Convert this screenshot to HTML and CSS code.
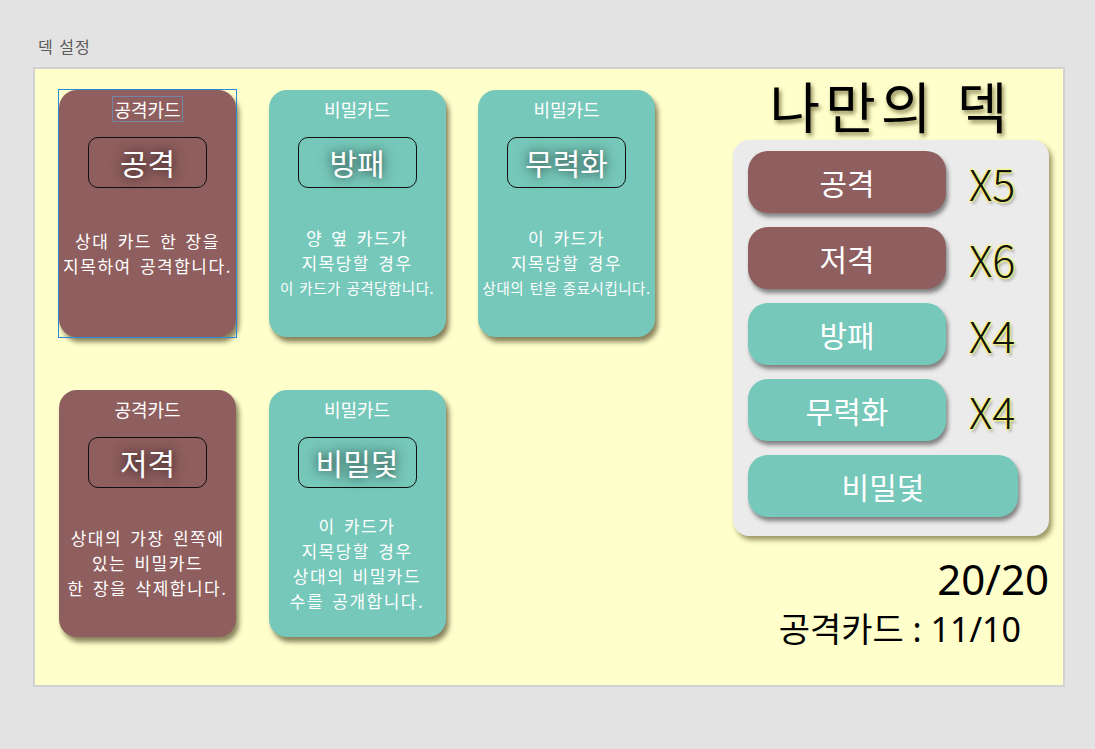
FILE: index.html
```html
<!DOCTYPE html>
<html lang="ko">
<head>
  <meta charset="UTF-8" />
  <title>덱 설정</title>
  <link rel="stylesheet" href="styles.css">
</head>
<body>

  <div class="page-label">덱 설정</div>

  <div class="board">
    <div class="card-grid">
      <div class="card attack selected">
        <div class="card-type"><span class="type-text">공격카드</span></div>
        <div class="card-name">공격</div>
        <div class="card-desc short">상대 카드 한 장을<br>지목하여 공격합니다.</div>
      </div>
      <div class="card secret">
        <div class="card-type"><span class="type-text">비밀카드</span></div>
        <div class="card-name">방패</div>
        <div class="card-desc">양 옆 카드가<br>지목당할 경우<br><small>이 카드가 공격당합니다.</small></div>
      </div>
      <div class="card secret">
        <div class="card-type"><span class="type-text">비밀카드</span></div>
        <div class="card-name">무력화</div>
        <div class="card-desc">이 카드가<br>지목당할 경우<br><small>상대의 턴을 종료시킵니다.</small></div>
      </div>
      <div class="card attack">
        <div class="card-type"><span class="type-text">공격카드</span></div>
        <div class="card-name">저격</div>
        <div class="card-desc">상대의 가장 왼쪽에<br>있는 비밀카드<br>한 장을 삭제합니다.</div>
      </div>
      <div class="card secret">
        <div class="card-type"><span class="type-text">비밀카드</span></div>
        <div class="card-name">비밀덫</div>
        <div class="card-desc">이 카드가<br>지목당할 경우<br>상대의 비밀카드<br>수를 공개합니다.</div>
      </div>
    </div>

    <div class="deck-side">
      <h1 class="deck-title">나만의 덱</h1>
      <div class="deck-panel">
        <div class="deck-row">
          <div class="deck-btn attack">공격</div>
          <span class="count">X5</span>
        </div>
        <div class="deck-row">
          <div class="deck-btn attack">저격</div>
          <span class="count">X6</span>
        </div>
        <div class="deck-row">
          <div class="deck-btn secret">방패</div>
          <span class="count">X4</span>
        </div>
        <div class="deck-row">
          <div class="deck-btn secret">무력화</div>
          <span class="count">X4</span>
        </div>
        <div class="deck-row">
          <div class="deck-btn secret wide">비밀덫</div>
        </div>
      </div>
      <div class="total">20/20</div>
      <div class="attack-count">공격카드 : 11/10</div>
    </div>
  </div>

</body>
</html>
```

FILE: styles.css
```css
body {
  margin: 0;
  background: #e3e3e3;
  font-family: "Noto Sans CJK KR", "Noto Sans", sans-serif;
  width: 1095px;
  height: 749px;
  overflow: hidden;
}
.page-label {
  padding: 36px 0 0 38px;
  font-size: 16px;
  line-height: 20px;
  letter-spacing: 1px;
  color: #5a5a5a;
}
.board {
  box-sizing: border-box;
  margin: 11px 0 0 33px;
  width: 1032px;
  height: 620px;
  background: #ffffcc;
  border: 2px solid #d2d2d2;
  display: flex;
}
.card-grid {
  padding: 21px 0 0 24px;
  display: grid;
  grid-template-columns: repeat(3, 177px);
  grid-auto-rows: 247px;
  column-gap: 32.5px;
  row-gap: 53px;
}
.card {
  position: relative;
  border-radius: 18px;
  box-shadow: 3px 5px 5px rgba(40, 30, 0, 0.55);
  color: #fff;
  display: flex;
  flex-direction: column;
  align-items: center;
  text-align: center;
}
.card.attack {
  background: #8f5e5e;
}
.card.secret {
  background: #76c8ba;
}
.card.selected::after {
  content: "";
  position: absolute;
  top: -1px;
  left: -1px;
  right: -1px;
  bottom: -1px;
  border: 1px solid #2a8ad8;
}
.card-type {
  padding-top: 6px;
  font-size: 18px;
  line-height: 24px;
}
.type-text {
  display: inline-block;
  padding: 0 1px;
  border: 1px solid transparent;
}
.selected .type-text {
  border-color: #7386a6;
}
.card-name {
  box-sizing: border-box;
  margin-top: 15px;
  width: 119px;
  height: 51px;
  border: 1px solid #111;
  border-radius: 10px;
  font-size: 30px;
  line-height: 48px;
  text-shadow: 0 0 10px rgba(0, 0, 0, 0.55), 0 0 16px rgba(0, 0, 0, 0.35);
}
.card-desc {
  flex: 1;
  display: flex;
  flex-direction: column;
  justify-content: center;
  font-size: 17px;
  line-height: 25px;
  letter-spacing: 1.5px;
  word-spacing: 2px;
  white-space: nowrap;
}
.card-desc.short {
  padding-bottom: 20px;
}
.card-desc small {
  font-size: 14.5px;
  letter-spacing: 0.5px;
  word-spacing: 1px;
}
.deck-side {
  margin: 0 14px 0 auto;
  width: 316px;
  display: flex;
  flex-direction: column;
}
.deck-title {
  margin: 0;
  height: 71px;
  font-size: 55px;
  line-height: 71px;
  font-weight: normal;
  text-align: center;
  letter-spacing: 5px;
  color: #000;
  text-shadow: 2px 3px 4px rgba(60, 50, 0, 0.6);
}
.deck-panel {
  background: #ebebeb;
  border-radius: 16px;
  box-shadow: 3px 4px 5px rgba(60, 50, 0, 0.5);
  padding: 11px 15px 19px;
  display: flex;
  flex-direction: column;
  gap: 14px;
}
.deck-row {
  display: flex;
  align-items: center;
}
.deck-btn {
  width: 198px;
  height: 62px;
  border-radius: 20px;
  color: #fff;
  font-size: 30px;
  line-height: 62px;
  text-align: center;
  box-shadow: 2px 4px 4px rgba(0, 0, 0, 0.45);
}
.deck-btn.attack {
  background: #8f5e5e;
}
.deck-btn.secret {
  background: #76c8ba;
}
.deck-btn.wide {
  width: 270px;
}
.count {
  margin-left: 23px;
  font-size: 43px;
  font-weight: 200;
  line-height: 62px;
  color: #111;
  text-shadow: 0 0 1px #ffff60, 0 0 2px #ffff60, 0 0 2px #ffff60, 0 0 3px #ffff60, 2px 3px 3px rgba(0, 0, 0, 0.3);
}
.total {
  margin-top: 18px;
  font-family: "Noto Sans", "Noto Sans CJK KR", sans-serif;
  font-size: 42px;
  line-height: 50px;
  text-align: right;
  color: #000;
}
.attack-count {
  font-family: "Noto Sans", "Noto Sans CJK KR", sans-serif;
  font-size: 34px;
  line-height: 50px;
  text-align: right;
  margin-right: 28px;
  color: #000;
}
```
